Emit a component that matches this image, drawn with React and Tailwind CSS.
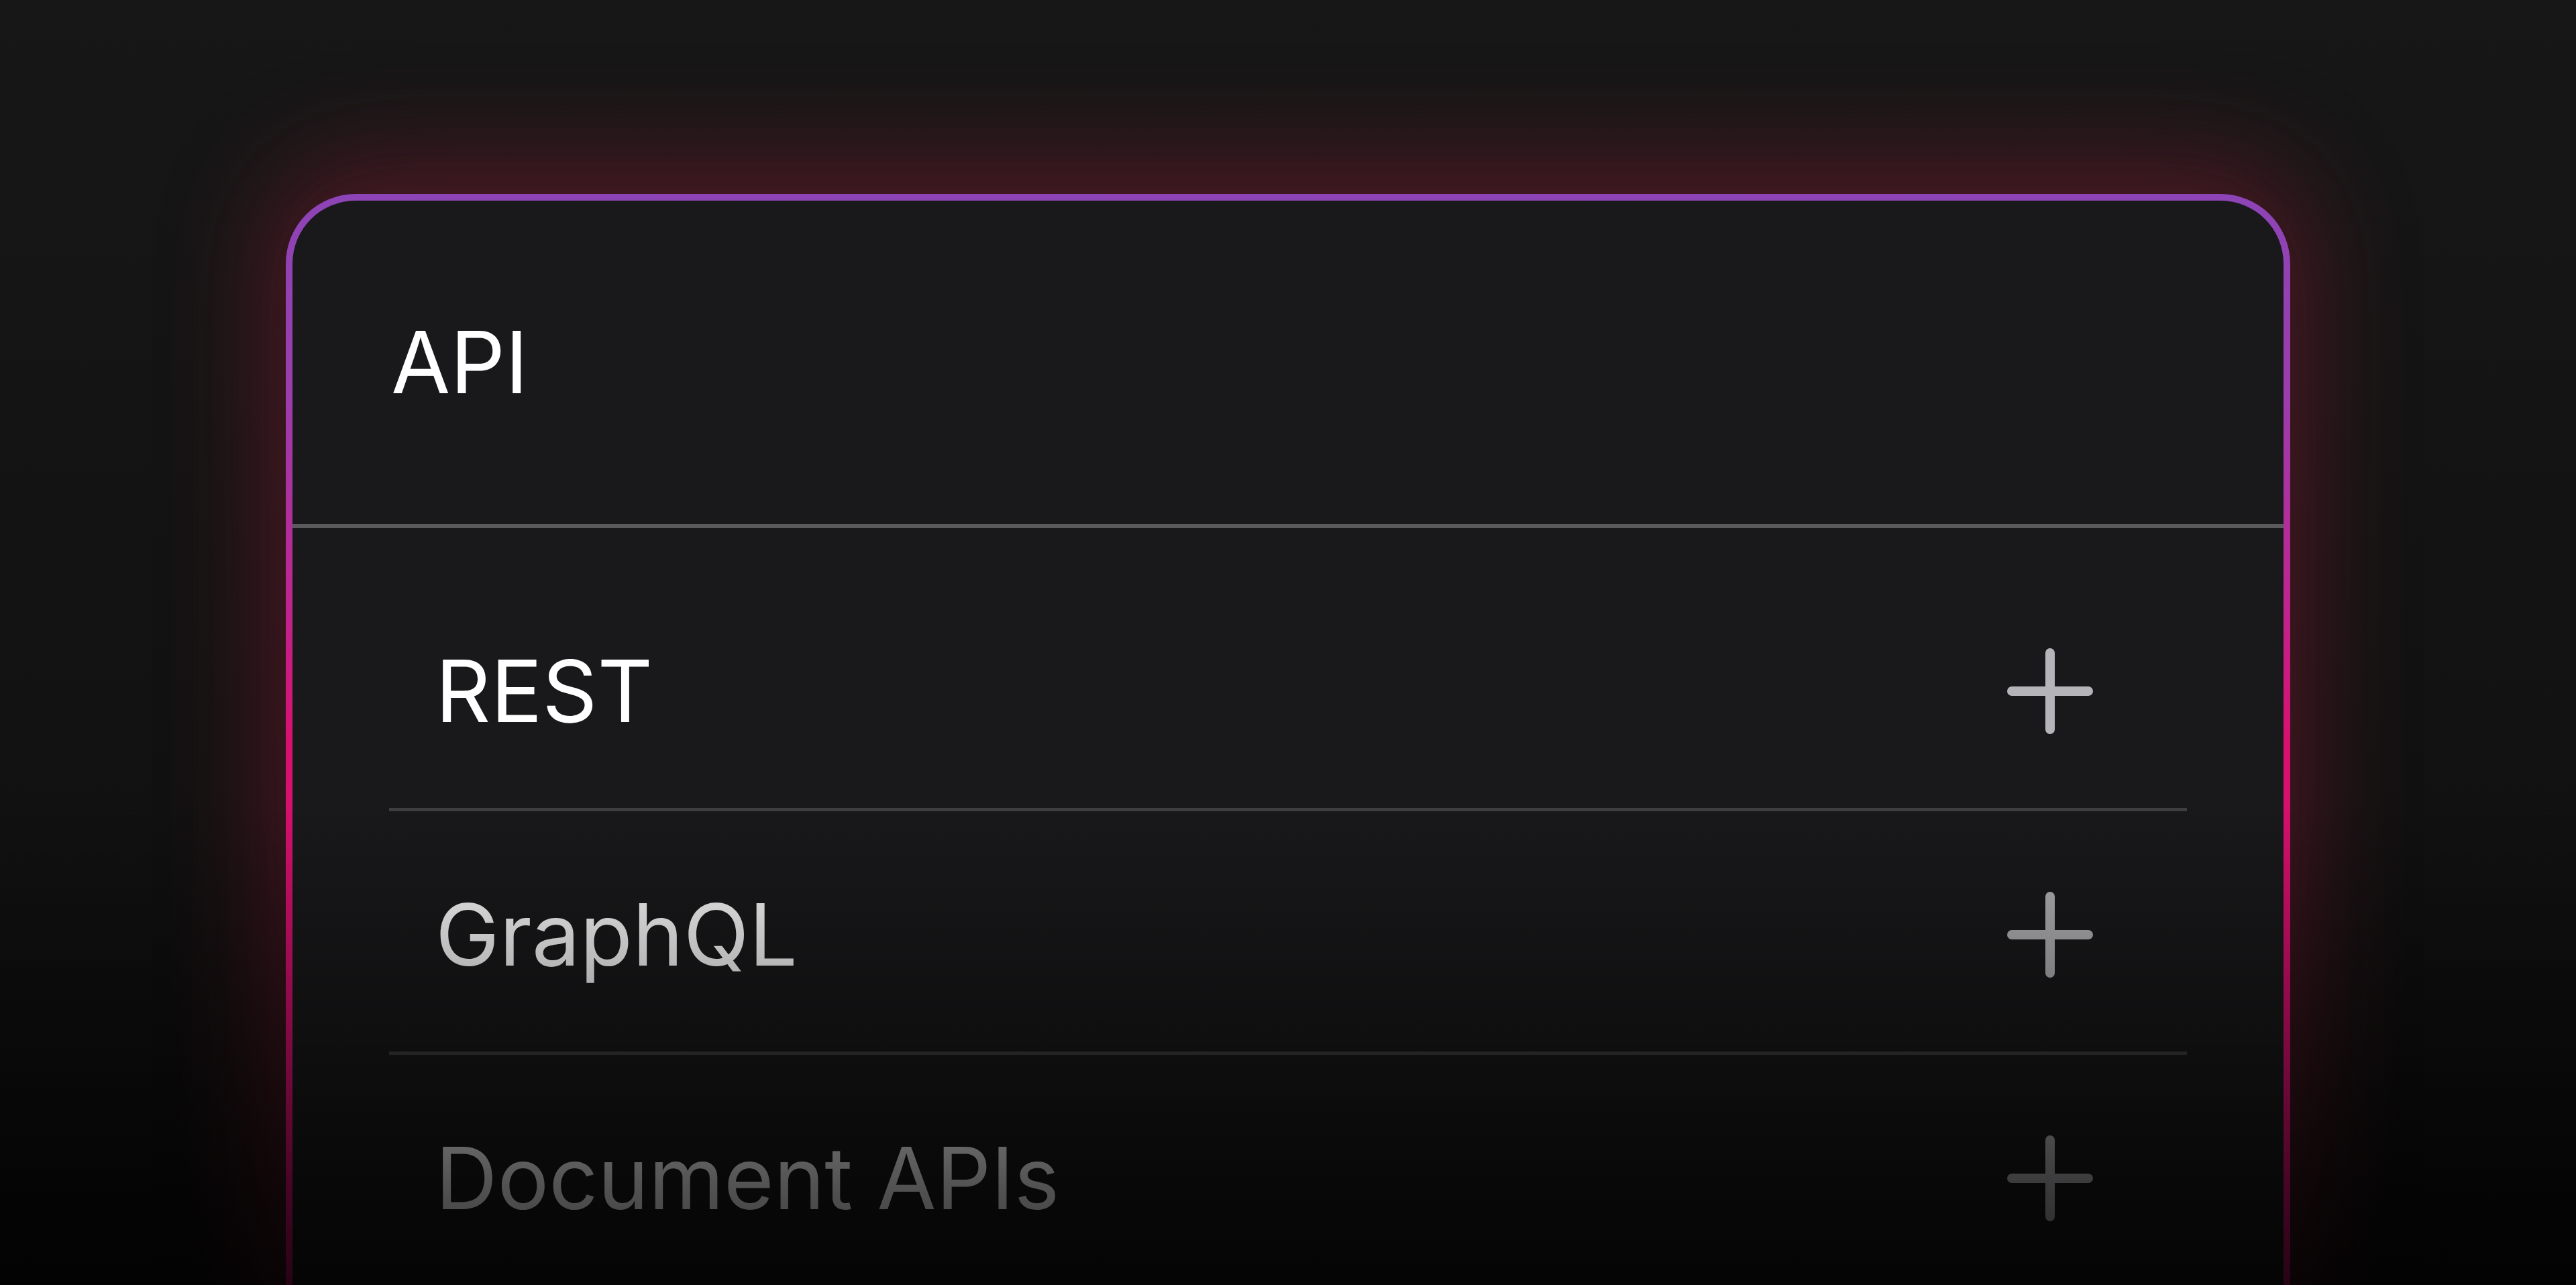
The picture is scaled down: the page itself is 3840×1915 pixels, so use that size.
const items = [
  { label: 'REST' },
  { label: 'GraphQL' },
  { label: 'Document APIs' },
]

function PlusIcon() {
  return (
    <svg width="128" height="128" viewBox="0 0 128 128" fill="none" className="shrink-0">
      <path d="M64 7V121M7 64H121" stroke="#b5b5b9" strokeWidth="14" strokeLinecap="round" />
    </svg>
  )
}

export default function App() {
  return (
    <div
      className="relative h-[1915px] overflow-hidden bg-[linear-gradient(to_bottom,#171717_0%,#121212_55%,#0e0e0e_100%)] pt-[289px]"
      style={{ fontFamily: 'Inter, "Noto Sans", sans-serif' }}
    >
      {/* card with gradient border + glow */}
      <div className="mx-auto w-[2988px] rounded-[104px] p-[10px] bg-[linear-gradient(to_bottom,#8d44b6_0px,#9b3dac_300px,#bd2690_600px,#d8106f_820px,#d8106f_2000px)] shadow-[0_-20px_160px_24px_rgba(150,30,55,0.45)]">
        <div className="min-h-[1900px] rounded-[94px] bg-[#19191b]">
          <div className="flex h-[482px] items-center pl-[147px]">
            <span className="text-[128px] leading-none text-white">API</span>
          </div>
          <div className="h-[6px] bg-[#5a5a5c]" />

          <ul className="px-[144px] pt-[59px]">
            {items.map(item => (
              <li
                key={item.label}
                className="flex h-[363px] items-center justify-between border-b-[5px] border-[#3f3f41] pt-[10px] pl-[69px] pr-[140px]"
              >
                <span className="text-[128px] leading-none text-white">{item.label}</span>
                <PlusIcon />
              </li>
            ))}
          </ul>
        </div>
      </div>

      {/* fade to black toward the bottom */}
      <div className="pointer-events-none absolute inset-0 bg-[linear-gradient(to_bottom,transparent_62%,rgba(0,0,0,0.23)_73%,rgba(0,0,0,0.67)_92%,rgba(0,0,0,0.82)_100%)]" />
    </div>
  )
}
